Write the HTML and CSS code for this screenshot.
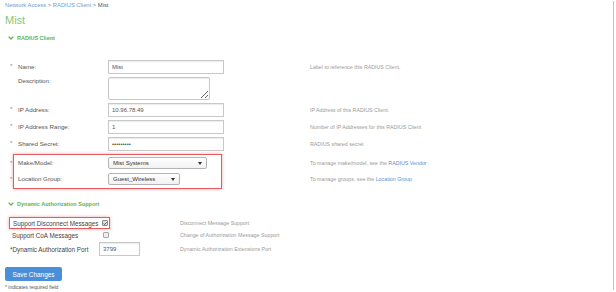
FILE: index.html
```html
<!DOCTYPE html>
<html>
<head>
<meta charset="utf-8">
<link rel="stylesheet" href="styles.css">
</head>
<body>
<div class="page">
  <div class="crumb"><a>Network Access</a> &gt; <a>RADIUS Client</a> &gt; <span class="cur">Mist</span></div>
  <div class="title">Mist</div>
  <div class="sec-head"><svg class="chev" width="6" height="4" viewBox="0 0 6 4"><path d="M0.6 0.6 L3 3 L5.4 0.6" fill="none" stroke="#5fb34a" stroke-width="1.3"/></svg><span>RADIUS Client</span></div>

  <div class="form">
    <div class="row">
      <span class="star">*</span><span class="label">Name:</span>
      <span class="field"><input class="inp" type="text" value="Mist"></span>
      <span class="help">Label to reference this RADIUS Client.</span>
    </div>
    <div class="row">
      <span class="star"></span><span class="label lbl-top">Description:</span>
      <span class="field"><textarea class="ta"></textarea></span>
    </div>
    <div class="row">
      <span class="star">*</span><span class="label">IP Address:</span>
      <span class="field"><input class="inp" type="text" value="10.96.78.49"></span>
      <span class="help">IP Address of this RADIUS Client.</span>
    </div>
    <div class="row">
      <span class="star">*</span><span class="label">IP Address Range:</span>
      <span class="field"><input class="inp" type="text" value="1"></span>
      <span class="help">Number of IP Addresses for this RADIUS Client</span>
    </div>
    <div class="row">
      <span class="star">*</span><span class="label">Shared Secret:</span>
      <span class="field"><input class="inp" type="password" value="secret123"></span>
      <span class="help">RADIUS shared secret</span>
    </div>

    <div class="redgroup">
      <div class="row srow">
        <span class="star">*</span><span class="label">Make/Model:</span>
        <span class="field"><span class="select sel-make"><span>Mist Systems</span><svg width="4" height="3" viewBox="0 0 4 3"><path d="M0 0 H4 L2 3 Z" fill="#333"/></svg></span></span>
        <span class="help">To manage make/model, see the <a>RADIUS Vendor</a></span>
      </div>
      <div class="row srow">
        <span class="star">*</span><span class="label">Location Group:</span>
        <span class="field"><span class="select sel-loc"><span>Guest_Wireless</span><svg width="4" height="3" viewBox="0 0 4 3"><path d="M0 0 H4 L2 3 Z" fill="#333"/></svg></span></span>
        <span class="help">To manage groups, see the <a>Location Group</a></span>
      </div>
    </div>
  </div>

  <div class="sec-head sec-dyn"><svg class="chev" width="6" height="4" viewBox="0 0 6 4"><path d="M0.6 0.6 L3 3 L5.4 0.6" fill="none" stroke="#5fb34a" stroke-width="1.3"/></svg><span>Dynamic Authorization Support</span></div>

  <div class="cb-box">
    <span class="cb-label">Support Disconnect Messages</span>
    <span class="cb checked"><svg width="5" height="5" viewBox="0 0 5 5"><path d="M0.8 2.6 L2 3.8 L4.3 1" fill="none" stroke="#333" stroke-width="1"/></svg></span>
    <span class="help2 h-disc">Disconnect Message Support</span>
  </div>
  <div class="cb-row">
    <span class="cb-label2">Support CoA Messages</span>
    <span class="cb"></span>
    <span class="help2 h-coa">Change of Authorization Message Support</span>
  </div>
  <div class="port-row">
    <span class="port-label">*Dynamic Authorization Port</span>
    <input class="inp port" type="text" value="3799">
    <span class="help2 h-port">Dynamic Authorization Extensions Port</span>
  </div>

  <button class="btn">Save Changes</button>
  <div class="note">* indicates required field</div>
</div>
</body>
</html>
```

FILE: styles.css
```css
html, body {
  margin: 0;
  padding: 0;
  background: #fff;
  font-family: "Liberation Sans", Arial, sans-serif;
}

.page {
  width: 608px;
  height: 289px;
  margin-top: 1px;
  padding-left: 5px;
  border-right: 1.5px solid #c2c2c2;
}

.crumb {
  font-size: 5.8px;
  line-height: 8px;
  color: #777;
  white-space: nowrap;
}
.crumb a { color: #6f9bd1; }
.crumb .cur { color: #555; }

.title {
  margin-top: 5px;
  font-size: 11px;
  line-height: 12px;
  color: #80c77a;
}

.sec-head {
  margin-top: 8px;
  padding-left: 3px;
  display: flex;
  align-items: center;
  gap: 3px;
  font-size: 5.5px;
  line-height: 8px;
  font-weight: bold;
  color: #5fb34a;
}
.chev { flex-shrink: 0; }

.form { margin-top: 18px; }

.row {
  display: flex;
  align-items: flex-start;
  padding-left: 5px;
  margin-bottom: 3px;
  white-space: nowrap;
}
.row > * { flex-shrink: 0; }

.star {
  width: 8px;
  font-size: 6px;
  line-height: 12px;
  color: #888;
}
.label {
  width: 90px;
  font-size: 6.2px;
  line-height: 14px;
  color: #555;
}
.lbl-top { line-height: 8px; }
.field { width: 202px; display: block; }

.help {
  font-size: 5.3px;
  line-height: 14px;
  color: #9a9a9a;
}
.help a, .help2 a { color: #5b8fd0; }

.inp {
  display: block;
  box-sizing: border-box;
  width: 116px;
  height: 14px;
  margin: 0;
  padding: 0 3px;
  border: 1px solid #c8c8c8;
  border-radius: 0;
  box-shadow: inset 0 1px 1px rgba(0,0,0,0.08);
  font-family: "Liberation Sans", Arial, sans-serif;
  font-size: 6px;
  color: #555;
  outline: none;
}
.ta {
  display: block;
  box-sizing: border-box;
  width: 102px;
  height: 23px;
  margin: 0;
  border: 1px solid #c8c8c8;
  border-radius: 2px;
  box-shadow: inset 0 1px 1px rgba(0,0,0,0.08);
  font-size: 6px;
}

.redgroup {
  margin-left: 8px;
  width: 209px;
  box-sizing: border-box;
  border: 1px solid #e45b60;
  box-shadow: 0 0 3px rgba(228,91,96,0.55);
  padding: 2px 0 3px 0;
}
.srow {
  padding-left: 0;
  margin-bottom: 4px;
}
.srow:last-child { margin-bottom: 0; }
.srow .star { margin-left: -4px; }
.srow .label, .srow .help { line-height: 12px; }

.select {
  box-sizing: border-box;
  height: 12px;
  display: flex;
  align-items: center;
  justify-content: space-between;
  padding: 0 4px;
  border: 1px solid #b4b4b4;
  border-radius: 2px;
  background: linear-gradient(#ffffff, #f1f1f1);
  font-size: 6px;
  color: #333;
}
.sel-make { width: 99px; }
.sel-loc { width: 72px; }

.sec-dyn { margin-top: 11px; }

.cb-box {
  margin-top: 9px;
  margin-left: 4px;
  width: 101px;
  height: 12px;
  box-sizing: border-box;
  border: 1px solid #e45b60;
  box-shadow: 0 0 3px rgba(228,91,96,0.55);
  display: flex;
  align-items: center;
  padding-left: 3px;
  white-space: nowrap;
}
.cb-box > *, .cb-row > *, .port-row > * { flex-shrink: 0; }
.cb-label {
  width: 89px;
  font-size: 6.3px;
  color: #444;
}
.cb {
  box-sizing: border-box;
  width: 6px;
  height: 6px;
  border: 1px solid #a8a8a8;
  border-radius: 1px;
  background: #efefef;
  display: flex;
  align-items: center;
  justify-content: center;
}
.cb.checked { background: #e2e2e2; border-color: #888; }
.cb svg { display: block; }

.help2 {
  font-size: 5.3px;
  color: #9a9a9a;
}
.h-disc { margin-left: 72px; }

.cb-row {
  display: flex;
  align-items: center;
  height: 12px;
  padding-left: 7px;
  white-space: nowrap;
}
.cb-label2 {
  width: 91px;
  font-size: 6.3px;
  color: #444;
}
.h-coa { margin-left: 71px; }

.port-row {
  margin-top: 1px;
  display: flex;
  align-items: center;
  padding-left: 5px;
  white-space: nowrap;
}
.port-label {
  width: 89px;
  font-size: 6.3px;
  color: #444;
}
.inp.port { width: 41px; height: 14px; }
.h-port { margin-left: 40px; }

.btn {
  display: block;
  margin: 11px 0 0 0;
  width: 57px;
  height: 14px;
  padding: 0;
  border: none;
  border-radius: 2px;
  background: #4a90d9;
  color: #fff;
  font-family: "Liberation Sans", Arial, sans-serif;
  font-size: 6.4px;
}

.note {
  margin-top: 3px;
  font-size: 5px;
  line-height: 6px;
  color: #555;
}
```
